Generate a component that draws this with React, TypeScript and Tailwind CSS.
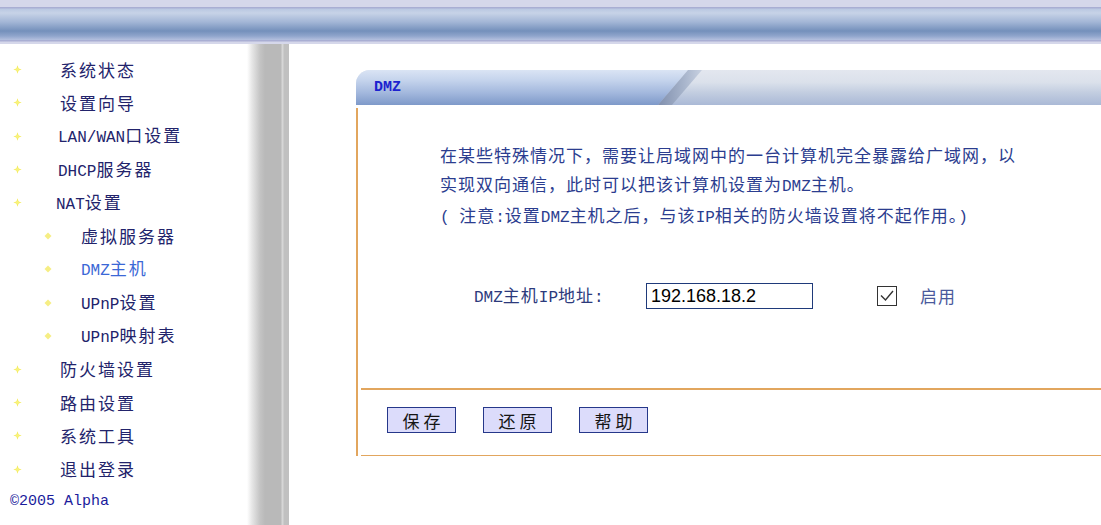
import React from 'react';

type MenuItem = {
  label: string;
  sub?: boolean;
  active?: boolean;
  indent: string;
};

const menu: MenuItem[] = [
  { label: '系统状态', indent: 'ml-[38px]' },
  { label: '设置向导', indent: 'ml-[38px]' },
  { label: 'LAN/WAN口设置', indent: 'ml-[36px]' },
  { label: 'DHCP服务器', indent: 'ml-[36px]' },
  { label: 'NAT设置', indent: 'ml-[34px]' },
  { label: '虚拟服务器', sub: true, indent: 'ml-[29px]' },
  { label: 'DMZ主机', sub: true, active: true, indent: 'ml-[29px]' },
  { label: 'UPnP设置', sub: true, indent: 'ml-[29px]' },
  { label: 'UPnP映射表', sub: true, indent: 'ml-[29px]' },
  { label: '防火墙设置', indent: 'ml-[38px]' },
  { label: '路由设置', indent: 'ml-[38px]' },
  { label: '系统工具', indent: 'ml-[38px]' },
  { label: '退出登录', indent: 'ml-[38px]' },
];

// split text into latin / cjk runs so each gets its own font metrics
const Mixed = ({ text, cjk, latin }: { text: string; cjk: string; latin: string }) => {
  const runs = text.match(/[\x00-\xff]+|[^\x00-\xff]+/g) ?? [];
  return (
    <>
      {runs.map((r, i) => (
        <span key={i} className={/[\x00-\xff]/.test(r[0]) ? latin : cjk}>
          {r}
        </span>
      ))}
    </>
  );
};

const MENU_CJK = "font-['Noto_Sans_CJK_SC',sans-serif] text-[17px] tracking-[2px]";
const MENU_LAT = "font-['Liberation_Mono',monospace] text-[16px] font-medium";
const BODY_CJK = "font-['Noto_Sans_CJK_SC',sans-serif] text-[17px] tracking-[1px]";
const BODY_LAT = "font-['Liberation_Mono',monospace] text-[16px]";

const StarBullet = () => (
  <svg width="9" height="9" viewBox="0 0 9 9" className="shrink-0">
    <path d="M4.5 0.3 L5.6 3.4 L8.7 4.5 L5.6 5.6 L4.5 8.7 L3.4 5.6 L0.3 4.5 L3.4 3.4 Z" fill="#f4ec62" />
    <circle cx="4.5" cy="4.5" r="1.8" fill="#f8f27c" />
  </svg>
);

const DiamondBullet = () => (
  <svg width="8" height="8" viewBox="0 0 8 8" className="shrink-0">
    <path d="M4 0.5 L7.5 4 L4 7.5 L0.5 4 Z" fill="#f6ee84" />
  </svg>
);

const Sidebar = () => (
  <div className="flex shrink-0">
    <div className="w-[247px] bg-white pt-[9px]">
      {menu.map((m) => (
        <div
          key={m.label}
          className={`flex h-[33.3px] items-center ${m.sub ? 'pl-[44px]' : 'pl-[13px]'}`}
        >
          {m.sub ? <DiamondBullet /> : <StarBullet />}
          <span
            className={`${m.indent} whitespace-nowrap leading-none ${
              m.active ? 'text-[#3b68d6]' : 'text-[#22236b]'
            }`}
          >
            <Mixed text={m.label} cjk={MENU_CJK} latin={MENU_LAT} />
          </span>
        </div>
      ))}
      <div className="mt-[6px] pl-[10px] font-['Liberation_Mono',monospace] text-[15px] leading-[20px] text-[#1b1b9c]">
        ©2005 Alpha
      </div>
    </div>
    <div className="w-[42px] bg-[linear-gradient(to_right,#ffffff_0px,#e6e6e6_5px,#c4c4c4_13px,#b9b9b9_18px,#b9b9b9_34px,#d6d6d6_35px,#d6d6d6_36px,#c0c0c0_37px,#c0c0c0_42px)]" />
  </div>
);

const PanelHeader = () => (
  <div className="relative h-[35px] overflow-hidden rounded-tl-[14px] bg-[linear-gradient(to_bottom,#e3e7ef_0%,#dbe1eb_35%,#c2cde0_65%,#aab9d6_100%)]">
    <div className="absolute inset-y-0 left-0 w-[332px] [clip-path:polygon(0_0,100%_0,calc(100%-30px)_100%,0_100%)] bg-[linear-gradient(to_bottom,#dae4f4_0%,#c4d3ec_30%,#a3b8dd_65%,#7e99c9_100%)]" />
    <div className="absolute inset-y-0 left-[300px] w-[46px] [clip-path:polygon(32px_0,46px_0,16px_100%,2px_100%)] bg-[linear-gradient(to_right,#7d8cab,#a7b4cb_60%,#c8d1e1)]" />
    <div className="absolute left-[18px] top-[9px] font-['Liberation_Mono',monospace] text-[15px] font-bold leading-[18px] text-[#1c22cf]">
      DMZ
    </div>
  </div>
);

const Button = ({ label }: { label: string }) => (
  <button className="flex h-[26px] w-[69px] items-center justify-center border border-[#26388a] bg-[#dcdcfb] font-['Noto_Sans_CJK_SC',sans-serif] text-[17px] leading-none tracking-[4px] text-[#151515]">
    <span className="ml-[4px]">{label}</span>
  </button>
);

export default function App() {
  return (
    <div className="flex h-[525px] w-[1101px] flex-col overflow-hidden bg-white">
      {/* top banner */}
      <div className="h-[44px] shrink-0 bg-[linear-gradient(to_bottom,#d5d7ea_0px,#d5d7ea_7px,#a9aed3_7px,#a9aed3_8px,#bac8e2_9px,#c7d3e7_13px,#a3b6d6_22px,#7490bb_31px,#90a5cc_36px,#b4c0de_40px,#a9aed3_40px,#a9aed3_41px,#d5d7ea_42px,#d5d7ea_44px)]" />

      <div className="flex flex-1">
        <Sidebar />

        {/* main */}
        <div className="flex-1 pl-[67px] pt-[26px]">
          <PanelHeader />

          <div className="mt-[3px] flex flex-col border-l-2 border-[#e2a65e]">
            <div className="pl-[82px] pt-[33px] text-[#2b3d8f]">
              <div className="leading-[28px] whitespace-nowrap">
                <Mixed
                  text="在某些特殊情况下，需要让局域网中的一台计算机完全暴露给广域网，以"
                  cjk={BODY_CJK}
                  latin={BODY_LAT}
                />
                <br />
                <Mixed
                  text="实现双向通信，此时可以把该计算机设置为DMZ主机。"
                  cjk={BODY_CJK}
                  latin={BODY_LAT}
                />
              </div>
              <div className="leading-[28px] whitespace-nowrap">
                <Mixed
                  text="( 注意:设置DMZ主机之后，与该IP相关的防火墙设置将不起作用。)"
                  cjk={BODY_CJK}
                  latin={BODY_LAT}
                />
              </div>
            </div>

            <div className="mt-[51px] flex h-[26px] items-center pl-[116px]">
              <div className="w-[172px] whitespace-nowrap leading-none text-[#2c3a7c]">
                <Mixed text="DMZ主机IP地址:" cjk={BODY_CJK} latin={BODY_LAT} />
              </div>
              <div className="flex h-[26px] w-[167px] items-center border border-[#1f3a7a] bg-white pl-[4px] font-['Liberation_Sans',sans-serif] text-[18px] text-black">
                192.168.18.2
              </div>
              <div className="ml-[64px] flex h-[20px] w-[20px] items-center justify-center border border-[#333] bg-white">
                <svg width="18" height="18" viewBox="0 0 18 18">
                  <path d="M3 8.5 L7.5 13 L15 4" fill="none" stroke="#333" strokeWidth="1.4" />
                </svg>
              </div>
              <span className={`ml-[23px] text-[#4a5a9c] ${BODY_CJK}`}>启用</span>
            </div>

            <div className="ml-[3px] mt-[79px] h-[2px] bg-[#e2a65e]" />

            <div className="mt-[17px] flex gap-[27px] pl-[29px]">
              <Button label="保存" />
              <Button label="还原" />
              <Button label="帮助" />
            </div>

            <div className="ml-[3px] mt-[22px] h-px bg-[#e2a65e]" />
          </div>
        </div>
      </div>
    </div>
  );
}
